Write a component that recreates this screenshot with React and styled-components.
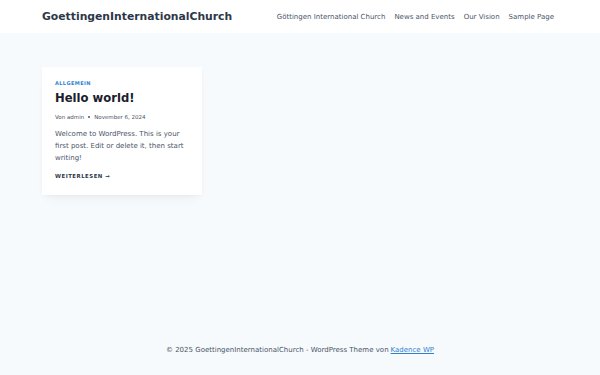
import React from "react";
import styled, { createGlobalStyle } from "styled-components";

const GlobalStyle = createGlobalStyle`
  html, body {
    margin: 0;
    padding: 0;
    background: #f7fafc;
    font-family: "DejaVu Sans", "Liberation Sans", sans-serif;
    color: #2d3748;
  }
`;

const Page = styled.div`
  display: flex;
  flex-direction: column;
  min-height: 375px;
`;

const Header = styled.header`
  background: #ffffff;
  height: 33px;
  display: flex;
  align-items: center;
  justify-content: space-between;
  padding: 0 46px 0 42px;
`;

const SiteTitle = styled.div`
  font-size: 10.8px;
  font-weight: bold;
  color: #2d3748;
  white-space: nowrap;
`;

const Nav = styled.nav`
  display: flex;
  gap: 9px;
`;

const NavLink = styled.a`
  font-size: 7px;
  color: #4a5568;
  text-decoration: none;
  white-space: nowrap;
`;

const Main = styled.main`
  flex: 1;
  padding: 34px 42px 0;
`;

const Card = styled.article`
  width: 160px;
  box-sizing: border-box;
  background: #ffffff;
  padding: 12px 10px 15px 13px;
  box-shadow: 0 8px 12px -6px rgba(0, 0, 0, 0.06), 0 1px 3px rgba(0, 0, 0, 0.03);
`;

const Category = styled.div`
  font-size: 5px;
  line-height: 8px;
  font-weight: bold;
  letter-spacing: 0.4px;
  color: #3182ce;
`;

const Title = styled.h2`
  font-size: 11.6px;
  line-height: 16px;
  font-weight: bold;
  color: #1a202c;
  margin: 3px 0 7px;
`;

const Meta = styled.div`
  font-size: 5.5px;
  line-height: 8px;
  color: #4a5568;
  display: flex;
  align-items: center;
  gap: 4px;
`;

const Dot = styled.span`
  width: 2px;
  height: 2px;
  border-radius: 50%;
  background: #4a5568;
`;

const Excerpt = styled.p`
  font-size: 7px;
  line-height: 12px;
  color: #4a5568;
  margin: 7px 0 8px;
`;

const ReadMore = styled.a`
  display: block;
  font-size: 5.4px;
  line-height: 8px;
  font-weight: bold;
  letter-spacing: 0.5px;
  color: #2d3748;
  text-decoration: none;
`;

const Footer = styled.footer`
  height: 48px;
  display: flex;
  justify-content: center;
  padding-top: 19px;
  box-sizing: border-box;
  font-size: 7px;
  color: #4a5568;
`;

const FooterLink = styled.a`
  color: #3182ce;
  text-decoration: underline;
  margin-left: 2px;
`;

export default function App() {
  return (
    <Page>
      <GlobalStyle />
      <Header>
        <SiteTitle>GoettingenInternationalChurch</SiteTitle>
        <Nav>
          <NavLink>Göttingen International Church</NavLink>
          <NavLink>News and Events</NavLink>
          <NavLink>Our Vision</NavLink>
          <NavLink>Sample Page</NavLink>
        </Nav>
      </Header>
      <Main>
        <Card>
          <Category>ALLGEMEIN</Category>
          <Title>Hello world!</Title>
          <Meta>
            <span>Von admin</span>
            <Dot />
            <span>November 6, 2024</span>
          </Meta>
          <Excerpt>
            Welcome to WordPress. This is your first post. Edit or delete it,
            then start writing!
          </Excerpt>
          <ReadMore>WEITERLESEN →</ReadMore>
        </Card>
      </Main>
      <Footer>
        © 2025 GoettingenInternationalChurch - WordPress Theme von
        <FooterLink>Kadence WP</FooterLink>
      </Footer>
    </Page>
  );
}
